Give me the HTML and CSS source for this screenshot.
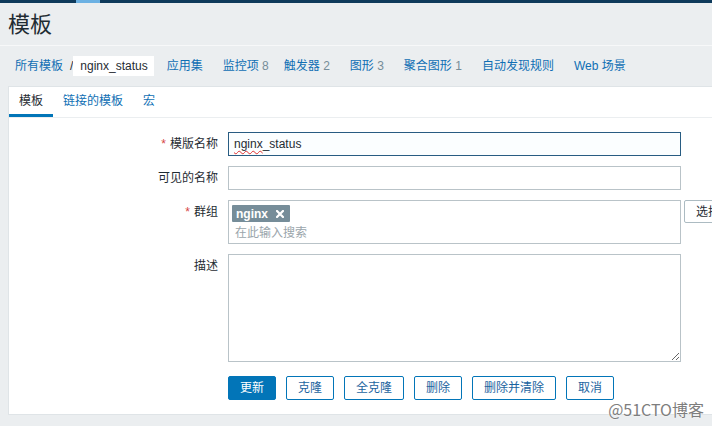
FILE: index.html
```html
<!DOCTYPE html>
<html lang="zh-CN">
<head>
<meta charset="utf-8">
<title>模板</title>
<link rel="stylesheet" href="styles.css">
</head>
<body>
<div class="topbar"><span class="topbar-mark"></span></div>
<header class="page-header"><h1 class="page-title">模板</h1></header>
<nav class="object-nav">
  <a class="nav-link">所有模板</a>
  <span class="nav-sep">/</span>
  <span class="nav-current">nginx_status</span>
  <a class="nav-item nav-first">应用集</a>
  <a class="nav-item">监控项 <span class="count">8</span></a>
  <a class="nav-item nav-tight">触发器 <span class="count">2</span></a>
  <a class="nav-item">图形 <span class="count">3</span></a>
  <a class="nav-item">聚合图形 <span class="count">1</span></a>
  <a class="nav-item">自动发现规则</a>
  <a class="nav-item">Web 场景</a>
</nav>
<main class="panel">
  <ul class="tabs">
    <li class="tab tab-active">模板</li>
    <li class="tab">链接的模板</li>
    <li class="tab">宏</li>
  </ul>
  <form class="form">
    <label class="label"><span class="req">*</span>模版名称</label>
    <div class="field"><div class="input input-focus"><span class="misspelled">nginx</span>_status</div></div>

    <label class="label">可见的名称</label>
    <div class="field"><div class="input"></div></div>

    <label class="label"><span class="req">*</span>群组</label>
    <div class="field field-group">
      <div class="multiselect">
        <span class="tag">nginx<svg class="tag-x" width="8" height="8" viewBox="0 0 8 8"><path d="M1 1L7 7M7 1L1 7" stroke="#fff" stroke-width="2.2" stroke-linecap="square"/></svg></span>
        <span class="placeholder">在此输入搜索</span>
      </div>
      <button type="button" class="btn btn-grey">选择</button>
    </div>

    <label class="label">描述</label>
    <div class="field"><textarea class="textarea"></textarea></div>

    <div class="spacer"></div>
    <div class="field buttons">
      <button type="button" class="btn btn-primary">更新</button>
      <button type="button" class="btn">克隆</button>
      <button type="button" class="btn">全克隆</button>
      <button type="button" class="btn">删除</button>
      <button type="button" class="btn">删除并清除</button>
      <button type="button" class="btn">取消</button>
    </div>
  </form>
</main>
<div class="watermark">@51CTO博客</div>
</body>
</html>
```
FILE: styles.css
```css
* { box-sizing: border-box; margin: 0; padding: 0; }
html, body { height: 100%; }
body {
  background: #ebeef0;
  font-family: "Liberation Sans", "Noto Sans CJK SC", Arial, sans-serif;
  font-size: 12px;
  line-height: 14px;
  color: #1f2c33;
  overflow: hidden;
  position: relative;
}
.topbar { height: 3px; background: #0e3a5b; display: flex; }
.topbar-mark { width: 24px; margin-left: 76px; background: #6cb1e3; }

.page-header {
  height: 43px;
  border-bottom: 1px solid #f7f8f9;
  padding: 11px 8px 0;
}
.page-title {
  font-size: 22px;
  line-height: 22px;
  font-weight: normal;
  color: #1f2c33;
}

.object-nav {
  height: 40px;
  display: flex;
  align-items: center;
  padding-left: 15px;
  white-space: nowrap;
}
.nav-link, .nav-item { color: #0f6fb4; }
.nav-sep { margin-left: 7px; color: #1f2c33; }
.nav-current {
  background: #fff;
  height: 20px;
  line-height: 20px;
  padding: 0 6px 0 7px;
  color: #1f2c33;
}
.nav-item { margin-left: 20px; }
.nav-first { margin-left: 13px; }
.nav-tight { margin-left: 15px; }
.count { color: #768d99; }

.panel {
  margin-left: 8px;
  background: #fff;
  border: 1px solid #dfe4e7;
  border-right: none;
}
.tabs {
  list-style: none;
  display: flex;
  height: 31px;
  border-bottom: 1px solid #ebeef0;
}
.tab {
  height: 30px;
  line-height: 28px;
  padding: 0 10px;
  color: #0f6fb4;
  border-bottom: 3px solid transparent;
}
.tab-active { color: #1f2c33; border-bottom-color: #0275b8; }

.form {
  display: grid;
  grid-template-columns: 209px 1fr;
  column-gap: 10px;
  row-gap: 10px;
  padding: 14px 0 14px;
}
.label {
  text-align: right;
  line-height: 24px;
  color: #1f2c33;
}
.req { color: #d64545; margin-right: 4px; }
.field { display: flex; align-items: flex-start; }
.input {
  width: 453px;
  height: 24px;
  border: 1px solid #b9c3c8;
  padding: 0 5px;
  line-height: 22px;
  background: #fff;
}
.input-focus { border-color: #285c82; background: #fbfeff; }
.misspelled {
  text-decoration: underline wavy #e03030;
  text-decoration-thickness: 1px;
  text-underline-offset: 2px;
}

.field-group { gap: 3px; }
.multiselect {
  width: 453px;
  height: 44px;
  border: 1px solid #b9c3c8;
  padding: 4px 3px 0;
  display: flex;
  flex-direction: column;
  align-items: flex-start;
}
.tag {
  display: inline-flex;
  align-items: center;
  height: 17px;
  background: #768d99;
  color: #fff;
  font-weight: bold;
  padding: 0 6px 0 4px;
  gap: 8px;
  border-radius: 1px;
}
.tag-x { display: block; }
.placeholder {
  margin-top: 4px;
  padding-left: 3px;
  color: #9aa5ab;
}

.textarea {
  width: 453px;
  height: 108px;
  border: 1px solid #b9c3c8;
  resize: vertical;
  font: inherit;
  display: block;
}

.buttons { gap: 10px; margin-top: 4px; }
.btn {
  height: 24px;
  padding: 0 11px;
  border: 1px solid #0275b8;
  border-radius: 2px;
  background: #fff;
  color: #1c64a0;
  font-family: "Liberation Sans", "Noto Sans CJK SC", Arial, sans-serif;
  font-size: 12px;
  line-height: 22px;
  white-space: nowrap;
}
.btn-primary { background: #0275b8; color: #fff; }
.btn-grey { border-color: #acbbc2; color: #1f2c33; height: 23px; }

.watermark {
  position: absolute;
  right: 8px;
  bottom: 8px;
  font-family: "Noto Sans CJK SC", "Liberation Sans", sans-serif;
  font-size: 16px;
  line-height: 18px;
  color: #7e7e7e;
  text-shadow: 0 0 2px #fff;
}
```
